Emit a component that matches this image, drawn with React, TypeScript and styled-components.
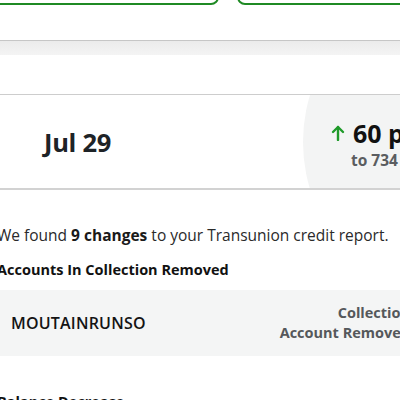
import React from "react";
import styled, { createGlobalStyle } from "styled-components";

const Global = createGlobalStyle`
  html, body { margin: 0; padding: 0; background: #fff; overflow: hidden; }
  body { font-family: "Open Sans", "Liberation Sans", sans-serif; color: #222; }
`;

const Page = styled.div`
  width: 400px;
  height: 400px;
  overflow: hidden;
  display: flex;
  flex-direction: column;
  & > * { flex-shrink: 0; }
`;

const ButtonRow = styled.div`
  display: flex;
  gap: 18px;
  margin-top: -39px;
  margin-left: -12px;
`;

const OutlineButton = styled.div<{ $w: number }>`
  flex: 0 0 ${(p) => p.$w}px;
  height: 40px;
  border: 2px solid #1f8a24;
  border-radius: 8px;
  box-sizing: content-box;
`;

const ShadowBand = styled.div`
  margin-top: 35px;
  height: 14px;
  border-top: 1px solid #c6c6c6;
  background: linear-gradient(#ebebeb, #f4f4f4);
`;

const WhiteGap = styled.div`
  height: 39px;
`;

const ScoreCard = styled.div`
  display: flex;
  align-items: center;
  height: 93px;
  border-top: 1px solid #cdcdcd;
  border-bottom: 2px solid #d2d2d2;
  overflow: hidden;
`;

const DateLabel = styled.div`
  flex: 1;
  padding-left: 44px;
  font-size: 25.5px;
  font-weight: 700;
  color: #1e2327;
  letter-spacing: -0.3px;
  padding-top: 1px;
`;

const ScoreCircle = styled.div`
  flex: 0 0 322px;
  height: 322px;
  border-radius: 50%;
  background: #f3f4f4;
  display: flex;
  flex-direction: column;
  justify-content: center;
  padding-left: 28px;
  padding-top: 4px;
  box-sizing: border-box;
  margin-right: -225px;
`;

const ScoreLine = styled.div`
  display: flex;
  align-items: center;
  gap: 8px;
  white-space: nowrap;
`;

const ScoreValue = styled.span`
  font-size: 25px;
  font-weight: 700;
  color: #111;
  line-height: 32px;
`;

const ScoreSub = styled.div`
  padding-left: 20px;
  margin-top: 1px;
  font-size: 15.5px;
  font-weight: 700;
  color: #5a5d60;
  line-height: 20px;
  white-space: nowrap;
`;

const Summary = styled.p`
  margin: 34px 0 0 -3px;
  font-size: 15.5px;
  line-height: 22px;
  color: #2a2a2a;
  white-space: nowrap;
  b { font-weight: 700; color: #1a1a1a; }
`;

const SectionTitle = styled.h3<{ $top: number }>`
  margin: ${(p) => p.$top}px 0 0 -3px;
  font-size: 14.5px;
  line-height: 20px;
  font-weight: 700;
  color: #111;
  white-space: nowrap;
`;

const AccountRow = styled.div`
  margin-top: 10px;
  height: 66px;
  width: 420px;
  background: #f4f5f5;
  display: flex;
  align-items: center;
  justify-content: space-between;
  padding: 0 10px 0 11px;
  box-sizing: border-box;
`;

const AccountName = styled.div`
  font-size: 16px;
  font-weight: 600;
  color: #141414;
  letter-spacing: 0.2px;
`;

const AccountStatus = styled.div`
  text-align: right;
  font-size: 14.5px;
  line-height: 20px;
  font-weight: 700;
  color: #55585b;
  white-space: nowrap;
`;

const UpArrow = () => (
  <svg width="14" height="16" viewBox="0 0 14 16" fill="none" stroke="#1f9a2a" strokeWidth="2.4" strokeLinecap="round" strokeLinejoin="round">
    <path d="M7 15V2" />
    <path d="M2 7l5-5 5 5" />
  </svg>
);

export default function App() {
  return (
    <Page>
      <Global />
      <ButtonRow>
        <OutlineButton $w={227} />
        <OutlineButton $w={200} />
      </ButtonRow>
      <ShadowBand />
      <WhiteGap />
      <ScoreCard>
        <DateLabel>Jul 29</DateLabel>
        <ScoreCircle>
          <ScoreLine>
            <UpArrow />
            <ScoreValue>60 pts</ScoreValue>
          </ScoreLine>
          <ScoreSub>to 734</ScoreSub>
        </ScoreCircle>
      </ScoreCard>
      <Summary>
        We found <b>9 changes</b> to your Transunion credit report.
      </Summary>
      <SectionTitle $top={14}>Accounts In Collection Removed</SectionTitle>
      <AccountRow>
        <AccountName>MOUTAINRUNSO</AccountName>
        <AccountStatus>
          Collection
          <br />
          Account Removed
        </AccountStatus>
      </AccountRow>
      <SectionTitle $top={36}>Balance Decrease</SectionTitle>
    </Page>
  );
}
